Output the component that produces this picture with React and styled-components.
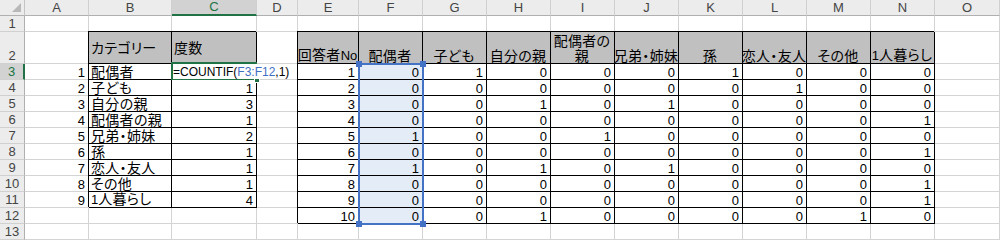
import React from "react";
import styled, { createGlobalStyle, css } from "styled-components";

const GREEN = "#217346";
const BLUE = "#4472c4";
const GRID = "#d4d4d4";
const HEAD_FILL = "#c0c0c0";
const RANGE_FILL = "#e4ecf7";

const GlobalStyle = createGlobalStyle`
  html, body {
    margin: 0;
    padding: 0;
    background: #fff;
  }
  body {
    overflow: hidden;
  }
`;

const Sheet = styled.div`
  display: grid;
  grid-template-columns: 25px 64px 83px 85px 41px 61px repeat(9, 64px) 65px;
  grid-template-rows: 16px 16px 32px repeat(11, 16px);
  width: 1000px;
  height: 240px;
  overflow: hidden;
  background: #fff;
  font-family: "Liberation Sans", Arial, sans-serif;
`;

const headBase = css`
  box-sizing: border-box;
  display: flex;
  justify-content: center;
  background: #ececec;
  color: #444;
  font-size: 13px;
  line-height: 14px;
`;

const Corner = styled.div`
  ${headBase}
  position: relative;
  border-right: 1px solid #c4c4c4;
  border-bottom: 1px solid #b0b0b0;

  &::after {
    content: "";
    position: absolute;
    right: 3px;
    bottom: 3px;
    width: 9px;
    height: 9px;
    background: #b8b8b8;
    clip-path: polygon(100% 0, 100% 100%, 0 100%);
  }
`;

const ColHead = styled.div`
  ${headBase}
  align-items: center;
  border-right: 1px solid #d0d0d0;
  border-bottom: 1px solid #b0b0b0;

  ${(p) =>
    p.$active &&
    css`
      background: #d2d2d2;
      color: ${GREEN};
      border-bottom: 2px solid ${GREEN};
    `}
`;

const RowHead = styled.div`
  ${headBase}
  align-items: ${(p) => (p.$tall ? "flex-end" : "center")};
  border-bottom: 1px solid #d0d0d0;
  border-right: 1px solid #b0b0b0;

  ${(p) =>
    p.$active &&
    css`
      background: #d2d2d2;
      color: ${GREEN};
      border-right: 2px solid ${GREEN};
    `}
`;

const JUSTIFY = { left: "flex-start", right: "flex-end", center: "center" };

const Cell = styled.div`
  position: relative;
  box-sizing: border-box;
  display: flex;
  align-items: ${(p) => (p.$middle ? "center" : "flex-end")};
  justify-content: ${(p) => JUSTIFY[p.$align || "left"]};
  padding: 0 3px 0 2px;
  min-width: 0;
  white-space: nowrap;
  background: ${(p) => p.$fill || "#fff"};
  border-right: 1px solid ${(p) => (p.$boxed ? "#000" : GRID)};
  border-bottom: 1px solid ${(p) => (p.$boxed ? "#000" : GRID)};
  box-shadow: ${(p) => (p.$boxed ? "-1px -1px 0 #000" : "none")};
  color: #000;
  font-size: 13px;
  line-height: 13px;
`;

const Jp = styled.span`
  font-family: "Noto Sans CJK JP", "Noto Sans CJK SC", sans-serif;
  font-size: 14px;
  line-height: 15px;
  letter-spacing: 0.3px;
  font-feature-settings: "palt";
  white-space: pre;
  text-align: center;
`;

const Latin = styled.span`
  font-family: "Liberation Sans", Arial, sans-serif;
  font-size: 13px;
  letter-spacing: 0;
`;

/* green frame of the active cell, with its fill handle */
const ActiveFrame = styled.div`
  position: absolute;
  z-index: 3;
  left: -1px;
  top: -2px;
  right: -1px;
  bottom: -1px;
  border: 2px solid ${GREEN};
  pointer-events: none;

  &::after {
    content: "";
    position: absolute;
    right: -5px;
    bottom: -5px;
    width: 4px;
    height: 4px;
    background: ${GREEN};
    border: 1px solid #fff;
  }
`;

/* in-cell formula editor, spills over the next column */
const Editor = styled.div`
  position: absolute;
  z-index: 4;
  left: 1px;
  top: 0;
  width: 124px;
  height: 15px;
  background: #fff;
  font-size: 12px;
  line-height: 16px;
  white-space: nowrap;
`;

const RefText = styled.span`
  color: #3f6fc3;
`;

/* blue outline around the range referenced by the formula */
const RangeFrame = styled.div`
  position: absolute;
  z-index: 2;
  left: -1px;
  top: -1px;
  width: 66px;
  height: 162px;
  box-sizing: border-box;
  border: 2px solid ${BLUE};
  pointer-events: none;
`;

const Handle = styled.span`
  position: absolute;
  width: 6px;
  height: 6px;
  background: ${BLUE};
  ${(p) => (p.$top ? "top: -4px;" : "bottom: -4px;")}
  ${(p) => (p.$left ? "left: -4px;" : "right: -4px;")}
`;

const COLUMNS = ["A", "B", "C", "D", "E", "F", "G", "H", "I", "J", "K", "L", "M", "N", "O"];

const categories = [
  "配偶者",
  "子ども",
  "自分の親",
  "配偶者の親",
  "兄弟・姉妹",
  "孫",
  "恋人・友人",
  "その他",
  "1人暮らし",
];
const counts = [null, 1, 3, 1, 2, 1, 1, 1, 4];

const answerHeads = [
  "回答者No",
  "配偶者",
  "子ども",
  "自分の親",
  "配偶者の\n親",
  "兄弟・姉妹",
  "孫",
  "恋人・友人",
  "その他",
  "1人暮らし",
];

const answers = [
  [1, 0, 1, 0, 0, 0, 1, 0, 0, 0],
  [2, 0, 0, 0, 0, 0, 0, 1, 0, 0],
  [3, 0, 0, 1, 0, 1, 0, 0, 0, 0],
  [4, 0, 0, 0, 0, 0, 0, 0, 0, 1],
  [5, 1, 0, 0, 1, 0, 0, 0, 0, 0],
  [6, 0, 0, 0, 0, 0, 0, 0, 0, 1],
  [7, 1, 0, 1, 0, 1, 0, 0, 0, 0],
  [8, 0, 0, 0, 0, 0, 0, 0, 0, 1],
  [9, 0, 0, 0, 0, 0, 0, 0, 0, 1],
  [10, 0, 0, 1, 0, 0, 0, 0, 1, 0],
];

// ascii runs are set narrower than the kana / kanji around them
function Label({ text }) {
  const parts = text.split(/([A-Za-z0-9]+)/).filter(Boolean);
  return (
    <Jp>
      {parts.map((part, i) =>
        /^[A-Za-z0-9]+$/.test(part) ? <Latin key={i}>{part}</Latin> : part
      )}
    </Jp>
  );
}

function SheetRow({ row }) {
  const cells = [];
  const cat = row - 3;
  const ans = row - 3;

  // A: category number
  cells.push(
    <Cell key="A" $align="right">
      {cat >= 0 && cat < 9 ? cat + 1 : ""}
    </Cell>
  );

  // B / C: category table
  if (row === 2) {
    cells.push(
      <Cell key="B" $boxed $middle $fill={HEAD_FILL}>
        <Label text="カテゴリー" />
      </Cell>,
      <Cell key="C" $boxed $middle $fill={HEAD_FILL}>
        <Label text="度数" />
      </Cell>
    );
  } else if (cat >= 0 && cat < 9) {
    cells.push(
      <Cell key="B" $boxed>
        <Label text={categories[cat]} />
      </Cell>
    );
    if (cat === 0) {
      cells.push(
        <Cell key="C" $boxed>
          <ActiveFrame />
          <Editor>
            =COUNTIF(<RefText>F3:F12</RefText>,1)
          </Editor>
        </Cell>
      );
    } else {
      cells.push(
        <Cell key="C" $boxed $align="right">
          {counts[cat]}
        </Cell>
      );
    }
  } else {
    cells.push(<Cell key="B" />, <Cell key="C" />);
  }

  cells.push(<Cell key="D" />);

  // E..N: answer table
  for (let c = 0; c < 10; c++) {
    const key = COLUMNS[4 + c];
    if (row === 2) {
      cells.push(
        <Cell key={key} $boxed $align="center" $fill={HEAD_FILL}>
          <Label text={answerHeads[c]} />
        </Cell>
      );
    } else if (ans >= 0 && ans < 10) {
      cells.push(
        <Cell
          key={key}
          $boxed
          $align="right"
          $fill={c === 1 ? RANGE_FILL : undefined}
        >
          {c === 1 && ans === 0 && (
            <RangeFrame>
              <Handle $top $left />
              <Handle $top />
              <Handle $left />
              <Handle />
            </RangeFrame>
          )}
          {answers[ans][c]}
        </Cell>
      );
    } else {
      cells.push(<Cell key={key} />);
    }
  }

  cells.push(<Cell key="O" />);

  return (
    <>
      <RowHead $tall={row === 2} $active={row === 3}>
        {row}
      </RowHead>
      {cells}
    </>
  );
}

export default function App() {
  const rows = Array.from({ length: 13 }, (_, i) => i + 1);
  return (
    <>
      <GlobalStyle />
      <Sheet>
        <Corner />
        {COLUMNS.map((col) => (
          <ColHead key={col} $active={col === "C"}>
            {col}
          </ColHead>
        ))}
        {rows.map((row) => (
          <SheetRow key={row} row={row} />
        ))}
      </Sheet>
    </>
  );
}
